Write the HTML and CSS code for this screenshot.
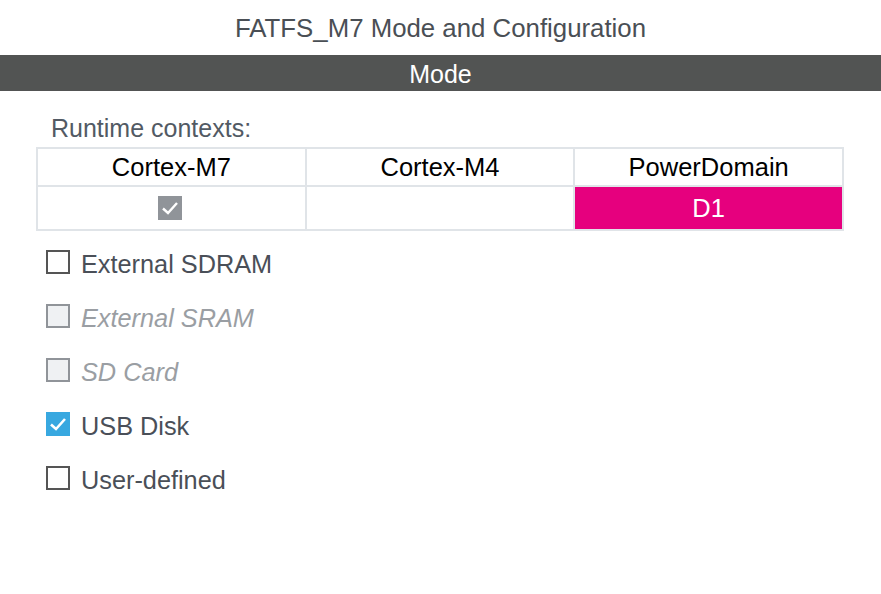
FILE: index.html
```html
<!DOCTYPE html>
<html>
<head>
<meta charset="utf-8">
<link rel="stylesheet" href="styles.css">
</head>
<body>
<div class="title">FATFS_M7 Mode and Configuration</div>
<div class="bar">Mode</div>
<div class="content">
  <div class="rc-label">Runtime contexts:</div>
  <table class="ctx">
    <tr class="head">
      <td>Cortex-M7</td>
      <td>Cortex-M4</td>
      <td>PowerDomain</td>
    </tr>
    <tr class="vals">
      <td><span class="grey-check"><svg width="24" height="24" viewBox="0 0 24 24"><path d="M5 12.5 L10 17 L19 7" fill="none" stroke="#fff" stroke-width="2.4"/></svg></span></td>
      <td></td>
      <td class="pink">D1</td>
    </tr>
  </table>
  <div class="options">
    <div class="opt"><span class="cb"></span><span class="lbl">External SDRAM</span></div>
    <div class="opt disabled"><span class="cb"></span><span class="lbl">External SRAM</span></div>
    <div class="opt disabled"><span class="cb"></span><span class="lbl">SD Card</span></div>
    <div class="opt"><span class="cb checked"><svg width="24" height="24" viewBox="0 0 24 24"><path d="M5 12.5 L10 17 L19 7" fill="none" stroke="#fff" stroke-width="2.6"/></svg></span><span class="lbl">USB Disk</span></div>
    <div class="opt"><span class="cb"></span><span class="lbl">User-defined</span></div>
  </div>
</div>
</body>
</html>
```

FILE: styles.css
```css
html, body {
  margin: 0;
  padding: 0;
  background: #fff;
  font-family: "Liberation Sans", Arial, sans-serif;
}
.title {
  height: 55px;
  line-height: 56px;
  text-align: center;
  font-size: 25.8px;
  color: #4a4f55;
}
.bar {
  height: 36px;
  line-height: 38px;
  background: #525453;
  color: #fff;
  text-align: center;
  font-size: 25px;
}
.content {
  padding: 23px 0 0 36px;
  width: 808px;
}
.rc-label {
  padding-left: 15px;
  font-size: 25px;
  color: #525a64;
  line-height: 28px;
  height: 33px;
}
.ctx {
  border-collapse: collapse;
  width: 808px;
  table-layout: fixed;
}
.ctx td {
  border: 2px solid #e0e4e8;
  text-align: center;
  padding: 0;
  font-size: 25.5px;
  color: #000;
}
.ctx .head td {
  height: 36px;
  line-height: 36px;
}
.ctx .vals td {
  height: 42px;
  line-height: 42px;
  vertical-align: middle;
}
.ctx td.pink {
  background: #e6007e;
  color: #fff;
}
.grey-check {
  display: inline-block;
  width: 24px;
  height: 24px;
  background: #909499;
  vertical-align: middle;
  line-height: 0;
  margin-top: -5px;
  margin-left: -3px;
}
.options {
  padding-top: 19px;
  padding-left: 10px;
  display: flex;
  flex-direction: column;
  gap: 30px;
}
.opt {
  display: flex;
  align-items: center;
  height: 24px;
  gap: 11px;
}
.cb {
  box-sizing: border-box;
  width: 24px;
  height: 24px;
  border: 2px solid #555;
  background: #fff;
  flex: none;
  line-height: 0;
}
.cb.checked {
  border: none;
  background: #38a8e0;
}
.lbl {
  font-size: 25.3px;
  color: #4a4f58;
  margin-top: 4px;
}
.disabled .cb {
  border-color: #909499;
  background: #eff1f3;
}
.disabled .lbl {
  color: #9a9ea3;
  font-style: italic;
}
```
